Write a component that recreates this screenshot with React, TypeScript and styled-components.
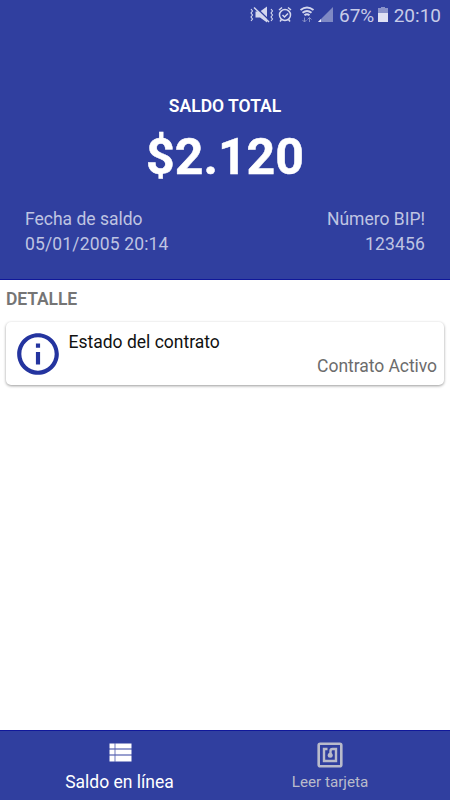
import React from 'react';
import styled, { createGlobalStyle } from 'styled-components';

const Global = createGlobalStyle`
  * { box-sizing: border-box; }
  body { margin: 0; background: #fff; font-family: Roboto, sans-serif; }
`;
const Screen = styled.div`width: 450px; height: 800px; display: flex; flex-direction: column; background: #fff; overflow: hidden;`;
const Header = styled.header`height: 280px; background: #303f9f; border-bottom: 1px solid #10189a; color: #fff; display: flex; flex-direction: column;`;
const StatusBar = styled.div`height: 30px; padding: 0 9px 0 249px; display: flex; align-items: center; color: #c8cce8; font-size: 19px; white-space: nowrap; flex: none;`;
const StatusIcons = styled.svg`width: 86px; height: 30px; flex: none;`;
const Percent = styled.span`margin-left: 4px; width: 38px; font-size: 19px;`;
const Battery = styled.svg`width: 14px; height: 30px; flex: none;`;
const Clock = styled.span`margin-left: auto;`;
const Caption = styled.div`margin-top: 65px; line-height: 22px; text-align: center; font-size: 17.5px; font-weight: 600;`;
const Amount = styled.div`margin-top: 10px; line-height: 60px; text-align: center; font-size: 50px; font-weight: 700; -webkit-text-stroke: 0.5px #fff;`;
const Facts = styled.div`margin-top: 20px; padding: 0 25px; display: flex; justify-content: space-between; font-size: 17.5px; line-height: 25px; color: #bfc4e2;`;
const Fact = styled.div<{ $end?: boolean }>`text-align: ${p => (p.$end ? 'right' : 'left')};`;
const FactValue = styled.div`letter-spacing: 0.16px;`;
const Content = styled.main`flex: 1;`;
const SectionTitle = styled.h2`margin: 8px 6px 12px; font-size: 17.5px; line-height: 22px; font-weight: 600; letter-spacing: -0.1px; color: #757575;`;
const Card = styled.section`margin: 0 6px; height: 63px; border-radius: 5px; background: #fff; box-shadow: 0 1px 3px rgba(0,0,0,.4); display: flex; padding: 7px 7px 0 6.5px;`;
const Info = styled.svg`width: 50px; height: 50px; flex: none;`;
const CardText = styled.div`flex: 1; padding: 1px 0 0 6px; font-size: 17.5px; line-height: 24px; color: #111;`;
const State = styled.div`text-align: right; color: #6c6c6c; letter-spacing: -0.05px;`;
const Nav = styled.nav`height: 70px; display: flex; background: #303f9f; border-top: 1px solid #10189a;`;
const Tab = styled.div<{ $active?: boolean }>`flex: 0 0 ${p => (p.$active ? '239px' : '182px')}; display: flex; flex-direction: column; align-items: center; padding-top: 9px; color: ${p => (p.$active ? '#fff' : '#b9bbcb')}; font-size: ${p => (p.$active ? '17.5px' : '15.2px')}; line-height: 24px;`;
const TabIcon = styled.svg`width: 30px; height: 30px; fill: currentColor;`;

export default function App() {
  return (
    <Screen>
      <Global />
      <Header>
        <StatusBar>
          <StatusIcons viewBox="0 0 86 30" fill="none" stroke="#d4d7ee" strokeWidth="1.5">
            <path d="M6.5 11.5h4.500l7-5v16l-7-5H6.500z" fill="#d4d7ee" stroke="none" />
            <path d="M6 6.500l15 14.500" stroke="#303f9f" strokeWidth="1.5" />
            <path d="M5 7.500l15 14.500" />
            <path d="M2 9l1.500 2L2 13l1.500 2L2 17l1.500 2L2 21M22 9l1.500 2-1.500 2 1.500 2-1.500 2 1.500 2-1.500 2" strokeWidth="1.1" />
            <circle cx="36" cy="15" r="5.5" />
            <path d="M30 10l3-2.500M42 10l-3-2.500M32.500 19.500L31 21.500M39.500 19.500l1.500 2M33.500 15l2 2 3.500-3.500" />
            <path d="M51.500 10q6.500-5 13 0M53.500 12.700q4.500-3.500 9 0M55.500 15.300q2.500-2 5 0" strokeWidth="1.9" />
            <path d="M55.500 22v-4.500M53.500 20l2 2 2-2M60.500 17.500V22M58.500 19.500l2-2 2 2" stroke="#8790c7" strokeWidth="1" />
            <path d="M84 7v15H69z" fill="#7f89c4" stroke="none" />
            <path d="M72 19v3h-3z" fill="#eef" stroke="none" />
          </StatusIcons>
          <Percent>67%</Percent>
          <Battery viewBox="0 0 14 30"><path d="M4 7h4v1h3v5H1V8h3z" fill="#8992ca" /><path d="M1 13h10v9H1z" fill="#dfe1f4" /></Battery>
          <Clock>20:10</Clock>
        </StatusBar>
        <Caption>SALDO TOTAL</Caption>
        <Amount>$2.120</Amount>
        <Facts>
          <Fact>Fecha de saldo<FactValue>05/01/2005 20:14</FactValue></Fact>
          <Fact $end>Número BIP!<FactValue>123456</FactValue></Fact>
        </Facts>
      </Header>
      <Content>
        <SectionTitle>DETALLE</SectionTitle>
        <Card>
          <Info viewBox="0 0 24 24" fill="#24349f"><path d="M11 17h2v-6h-2v6zm1-15C6.480 2 2 6.480 2 12s4.480 10 10 10 10-4.480 10-10S17.520 2 12 2zm0 18c-4.410 0-8-3.590-8-8s3.590-8 8-8 8 3.590 8 8-3.590 8-8 8zM11 9h2V7h-2v2z" /></Info>
          <CardText>Estado del contrato<State>Contrato Activo</State></CardText>
        </Card>
      </Content>
      <Nav>
        <Tab $active>
          <TabIcon viewBox="0 0 30 30"><path d="M4.500 3.500h5v5h-5zM10.500 3.500h16v5h-16zM4.500 9.500h5v5h-5zM10.500 9.500h16v5h-16zM4.500 15.500h5v6h-5zM10.500 15.500h16v6h-16z" /><path d="M9.500 3.500h1v5h-1zM9.500 9.500h1v5h-1zM9.500 15.500h1v6h-1z" opacity=".6" /></TabIcon>
          Saldo en línea
        </Tab>
        <Tab>
          <TabIcon viewBox="0 0 30 30">
            <rect x="3.7" y="3.7" width="22.6" height="22.6" rx="1.5" fill="none" stroke="currentColor" strokeWidth="2.6" />
            <path d="M12.500 9H9v12h12V9h-3.500q-2 0-2 2v4" fill="none" stroke="currentColor" strokeWidth="2.4" />
            <circle cx="15.2" cy="15.2" r="2.5" />
          </TabIcon>
          Leer tarjeta
        </Tab>
      </Nav>
    </Screen>
  );
}
